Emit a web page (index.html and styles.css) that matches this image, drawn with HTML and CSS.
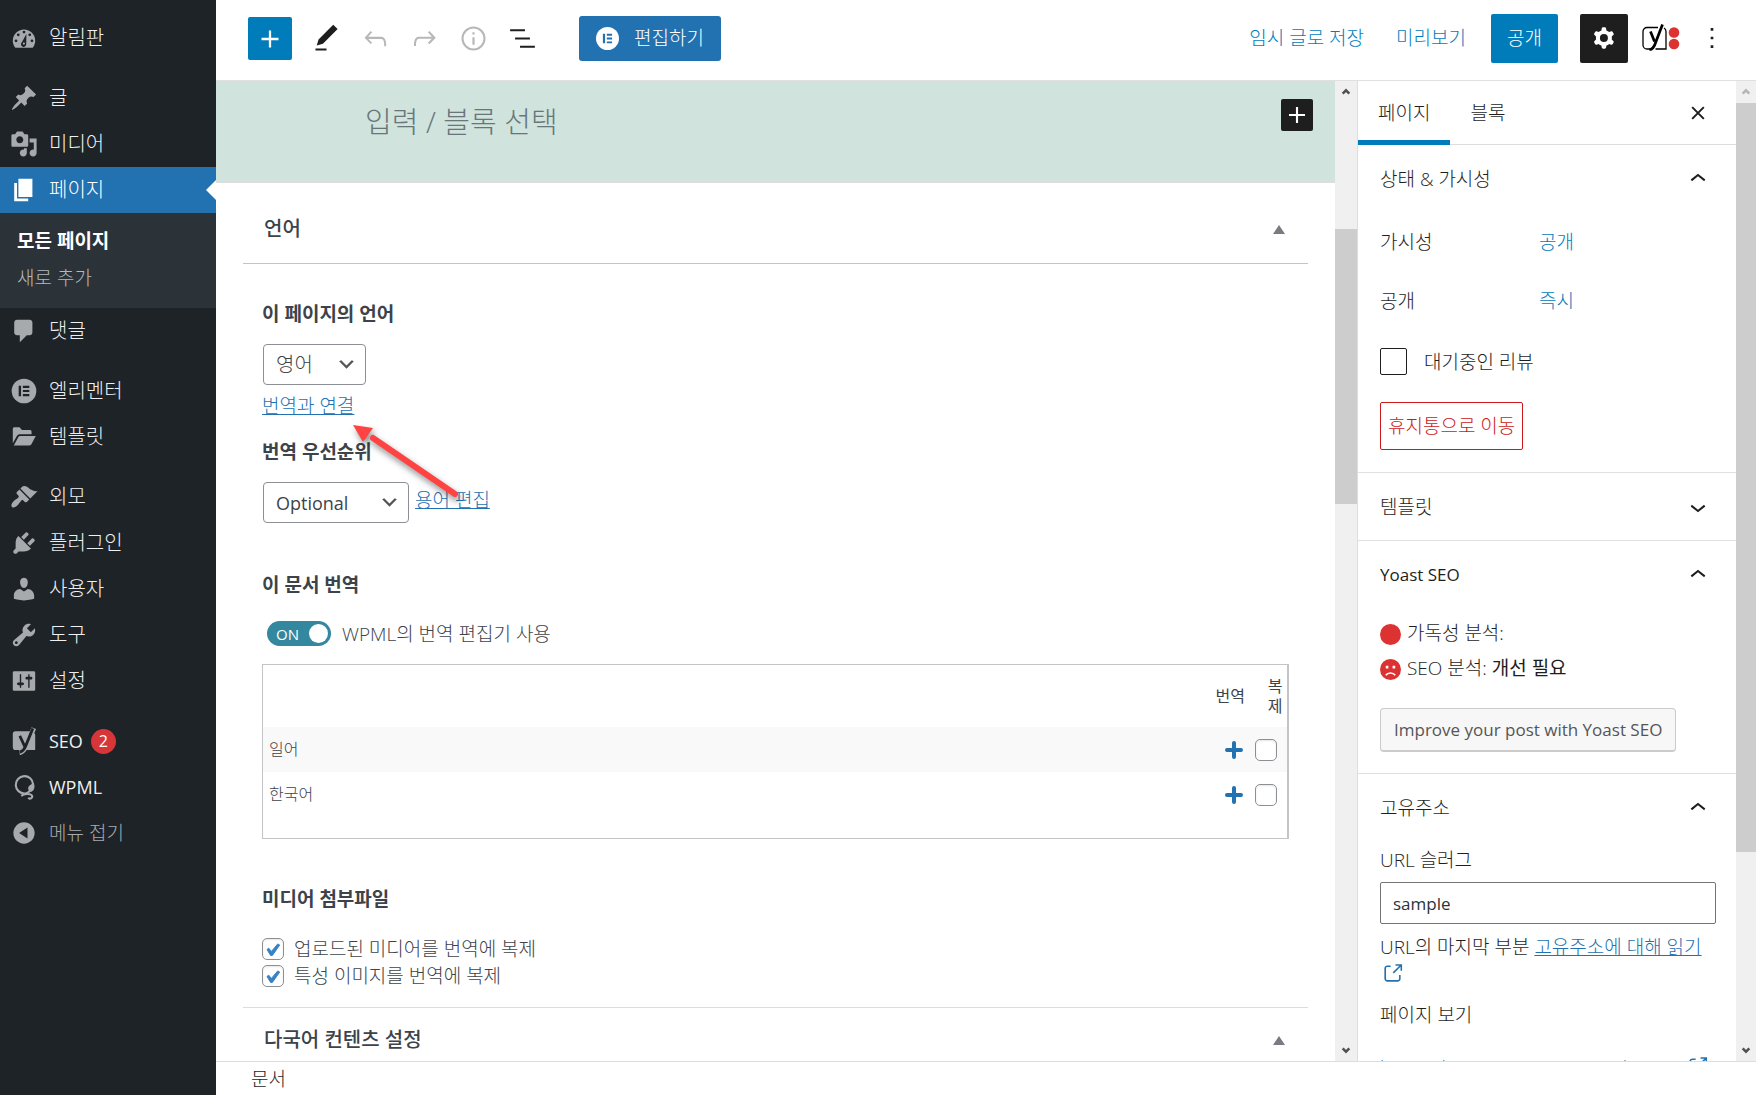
FILE: index.html
```html
<!DOCTYPE html>
<html lang="ko">

<head>
    <meta charset="UTF-8">
    <meta name="viewport" content="width=device-width, initial-scale=1.0">
    <title>페이지 편집</title>
    <link rel="stylesheet" href="styles.css">
</head>

<body>
    <nav class="admin-menu">
        <a class="menu-item" href="#">
            <svg class="menu-icon" viewBox="0 0 20 20"><path fill-rule="evenodd" d="M3.8 17h12.4c1.1-1.4 1.8-3.1 1.8-5 0-4.4-3.6-8-8-8s-8 3.600-8 8c0 1.900.7 3.600 1.800 5z"/><g class="cut"><circle cx="10" cy="5.800" r="1"/><circle cx="5.900" cy="7.700" r="1"/><circle cx="14.100" cy="7.700" r="1"/><circle cx="4.300" cy="12" r="1"/><circle cx="15.700" cy="12" r="1"/><path d="M11.700 7.200l-.1 6.900a1.900 1.900 0 1 1-3-1.200z"/></g><circle cx="9.900" cy="14" r=".8"/></svg>
            <span>알림판</span>
        </a>
        <div class="separator"></div>
        <a class="menu-item" href="#">
            <svg class="menu-icon" viewBox="0 0 20 20"><path d="M10.440 3.020l1.820-1.820 6.360 6.350-1.830 1.820c-1.050-.68-2.480-.57-3.410.36l-.75.75c-.92.93-1.040 2.350-.35 3.410l-1.830 1.820-2.410-2.410-2.800 2.790c-.42.42-3.380 2.710-3.800 2.290s1.860-3.390 2.280-3.810l2.790-2.790L4.100 9.360l1.830-1.820c1.050.69 2.480.57 3.400-.36l.75-.75c.93-.92 1.050-2.350.36-3.410z"/></svg>
            <span>글</span>
        </a>
        <a class="menu-item" href="#">
            <svg class="menu-icon" viewBox="0 0 20 20"><path d="M13 11V4c0-.55-.45-1-1-1h-1.670L9 1H5L3.670 3H2c-.55 0-1 .45-1 1v7c0 .55.45 1 1 1h10c.55 0 1-.45 1-1zM7 4.500c1.380 0 2.500 1.120 2.500 2.500S8.380 9.500 7 9.500 4.500 8.380 4.500 7 5.620 4.500 7 4.500zM14 6h5v10.500c0 1.380-1.120 2.500-2.500 2.500S14 17.880 14 16.500s1.120-2.500 2.500-2.500c.17 0 .34.02.5.05V9h-3V6zm-4 8.050V13h2v3.500c0 1.380-1.120 2.500-2.500 2.500S7 17.880 7 16.500 8.120 14 9.500 14c.17 0 .34.02.5.05z"/></svg>
            <span>미디어</span>
        </a>
        <a class="menu-item current" href="#">
            <svg class="menu-icon" viewBox="0 0 20 20"><path d="M6 15V2h10v13H6zm-1 1h8v2H3V5h2v11z"/></svg>
            <span>페이지</span>
        </a>
        <div class="submenu">
            <a class="active" href="#">모든 페이지</a>
            <a href="#">새로 추가</a>
        </div>
        <a class="menu-item" href="#">
            <svg class="menu-icon" viewBox="0 0 20 20"><path d="M5 2h9c1.100 0 2 .9 2 2v7c0 1.100-.9 2-2 2h-2l-5 5v-5H5c-1.100 0-2-.9-2-2V4c0-1.100.9-2 2-2z"/></svg>
            <span>댓글</span>
        </a>
        <div class="separator"></div>
        <a class="menu-item" href="#">
            <svg class="menu-icon" viewBox="0 0 20 20"><circle cx="10" cy="10" r="8.800"/><path class="cut" d="M6.200 6.300h1.700v7.400H6.200zM9.200 6.300h4.600v1.500H9.200zM9.200 9.250h4.600v1.500H9.200zM9.200 12.200h4.600v1.500H9.200z"/></svg>
            <span>엘리멘터</span>
        </a>
        <a class="menu-item" href="#">
            <svg class="menu-icon" viewBox="0 0 20 20"><path d="M2 14.500V4.200C2 3.500 2.500 3 3.200 3h3.600l1.700 2h5.700c.7 0 1.200.5 1.200 1.200V8H7.200c-1 0-1.800.4-2.300 1.200zM2.700 16l3.200-5.800c.3-.6.8-.9 1.500-.9H18.400l-3 5.700c-.3.6-.8 1-1.500 1z"/></svg>
            <span>템플릿</span>
        </a>
        <div class="separator"></div>
        <a class="menu-item" href="#">
            <svg class="menu-icon" viewBox="0 0 20 20"><path d="M14.480 11.060L7.410 3.990l1.500-1.500c.5-.56 2.300-.47 3.510.32 1.210.8 1.430 1.280 2.910 2.100 1.180.64 2.450 1.260 4.450.85zm-.71.71L6.700 4.700 4.930 6.470c-.39.39-.39 1.020 0 1.410l1.060 1.060c.39.39.39 1.030 0 1.420-.6.6-1.430 1.110-2.210 1.690-.35.26-.7.53-1.010.84C1.430 14.230.4 16.080 1.400 17.070c.99 1 2.840-.03 4.180-1.360.31-.31.58-.66.85-1.020.57-.78 1.080-1.610 1.690-2.210.39-.39 1.020-.39 1.410 0l1.060 1.060c.39.39 1.020.39 1.410 0z"/></svg>
            <span>외모</span>
        </a>
        <a class="menu-item" href="#">
            <svg class="menu-icon" viewBox="0 0 20 20"><path d="M13.110 4.360L9.870 7.600 8 5.730l3.240-3.240c.35-.34 1.050-.2 1.560.32.52.51.66 1.210.31 1.550zm-8 1.770l.91-1.120 9.010 9.010-1.190.84c-.71.71-2.630 1.160-3.820 1.160H6.140L4.900 17.260c-.59.59-1.540.59-2.120 0-.59-.58-.59-1.530 0-2.120l1.240-1.240v-3.880c0-1.130.4-3.190 1.090-3.890zm7.260 3.970l3.240-3.240c.34-.35 1.040-.21 1.550.31.52.51.66 1.210.31 1.550l-3.240 3.250z"/></svg>
            <span>플러그인</span>
        </a>
        <a class="menu-item" href="#">
            <svg class="menu-icon" viewBox="0 0 20 20"><path d="M10 9.250c-2.270 0-2.730-3.440-2.730-3.440C7 4.020 7.820 2 9.970 2c2.160 0 2.980 2.020 2.710 3.810 0 0-.41 3.440-2.680 3.440zm0 2.570L12.720 10c2.390 0 4.520 2.330 4.520 4.530v2.490s-3.650 1.130-7.240 1.130c-3.650 0-7.240-1.130-7.240-1.130v-2.490c0-2.250 1.940-4.480 4.470-4.480z"/></svg>
            <span>사용자</span>
        </a>
        <a class="menu-item" href="#">
            <svg class="menu-icon" viewBox="0 0 20 20"><path d="M16.680 9.770c-1.340 1.340-3.300 1.670-4.950.99l-5.410 6.520c-.99.99-2.590.99-3.580 0s-.99-2.590 0-3.570l6.520-5.420c-.68-1.650-.35-3.610.99-4.950 1.280-1.280 3.120-1.620 4.720-1.060l-2.890 2.890 2.820 2.820 2.860-2.870c.53 1.580.18 3.390-1.080 4.650zM3.810 16.210c.4.39 1.040.39 1.430 0 .4-.4.4-1.040 0-1.430-.39-.4-1.030-.4-1.430 0-.39.39-.39 1.030 0 1.430z"/></svg>
            <span>도구</span>
        </a>
        <a class="menu-item" href="#">
            <svg class="menu-icon" viewBox="0 0 20 20"><path d="M18 16V4c0-.55-.45-1-1-1H3c-.55 0-1 .45-1 1v12c0 .55.45 1 1 1h14c.55 0 1-.45 1-1zM8 11h1c.55 0 1 .45 1 1s-.45 1-1 1H8v1.500c0 .28-.22.5-.5.5s-.5-.22-.5-.5V13H6c-.55 0-1-.45-1-1s.45-1 1-1h1V5.500c0-.28.22-.5.5-.5s.5.22.5.5V11zm5-2h-1c-.55 0-1-.45-1-1s.45-1 1-1h1V5.500c0-.28.22-.5.5-.5s.5.22.5.5V7h1c.55 0 1 .45 1 1s-.45 1-1 1h-1v5.500c0 .28-.22.5-.5.5s-.5-.22-.5-.5V9z"/></svg>
            <span>설정</span>
        </a>
        <div class="separator"></div>
        <a class="menu-item english" href="#">
            <svg class="menu-icon" viewBox="0 0 20 20"><path d="M4 3h11.500L11.600 16.500H4a2 2 0 0 1-2-2V5a2 2 0 0 1 2-2zM16.700 4c.9.500 1.300 1.200 1.300 2v10.500h-6.500z"/><path class="y-edge" d="M17 .8L11.800 13c-1.200 3-2.200 4.900-5 5.400"/><path class="cut-line" d="M16.300 1L11.300 13.300c-1 2.600-2.200 4.200-4.400 4.600M7 6.300l3.500 7.500"/></svg>
            <span>SEO</span>
            <span class="count">2</span>
        </a>
        <a class="menu-item english" href="#">
            <svg class="menu-icon" viewBox="0 0 20 20"><path class="line" d="M10.500 14.600A6.200 6.200 0 1 1 16.500 8M10.500 14.600c2 0 3.200-1.200 4-2.200M8 16.300c2-1.400 6.500-2 7.700-.2.8 1.600-1.800 3.200-2.600 1.500"/><path d="M16.800 7c1.300 2.500.9 5.500-1.800 6.600-2.600-1-2.600-3.800-.5-5z"/></svg>
            <span>WPML</span>
        </a>
        <button class="menu-item collapse" type="button">
            <svg class="menu-icon" viewBox="0 0 20 20"><circle cx="10" cy="10" r="7.600"/><path class="cut" d="M12.500 6v8L6.500 10z"/></svg>
            <span>메뉴 접기</span>
        </button>
    </nav>

    <div class="editor">
        <header class="toolbar">
            <button class="inserter" type="button" aria-label="블록 추가">
                <svg viewBox="0 0 24 24"><path d="M18 11.200h-5.200V6h-1.600v5.200H6v1.600h5.200V18h1.600v-5.200H18z"/></svg>
            </button>
            <div class="tools">
                <button type="button" aria-label="도구"><svg viewBox="0 0 24 24"><path d="M20.100 5.100L16.900 2 6.200 12.700l-1.300 4.400 4.500-1.300L20.100 5.100zM4 20.800h8v-1.500H4v1.500z"/></svg></button>
                <button type="button" aria-label="되돌리기" disabled><svg viewBox="0 0 24 24"><path d="M18.300 11.700c-.6-.6-1.400-.9-2.300-.9H6.700l2.900-3.300-1.100-1-4.500 5L8.500 16l1-1-2.700-2.700H16c.5 0 .9.2 1.300.5 1 1 1 3.400 1 4.500v.3h1.500v-.2c0-1.500 0-4.300-1.500-5.700z"/></svg></button>
                <button type="button" aria-label="다시 실행" disabled><svg viewBox="0 0 24 24"><path d="M15.600 6.500l-1.100 1 2.900 3.300H8c-.9 0-1.700.3-2.300.9-1.400 1.500-1.400 4.200-1.400 5.600v.2h1.500v-.3c0-1.100 0-3.500 1-4.500.3-.3.7-.5 1.300-.5h9.200L14.500 15l1.100 1.100 4.600-4.600-4.600-5z"/></svg></button>
                <button type="button" aria-label="상세" disabled><svg viewBox="0 0 24 24"><circle cx="12" cy="12" r="8" fill="none" stroke="currentColor" stroke-width="1.500"/><path d="M11.200 11h1.600v5.500h-1.600zM11.200 7.500h1.600v1.600h-1.600z"/></svg></button>
                <button type="button" aria-label="목록 보기"><svg viewBox="0 0 24 24"><path d="M13.800 5.200H3v1.500h10.800V5.200zm-3.600 12v1.500H21v-1.500H10.200zm7.200-6H6.600v1.500h10.800v-1.500z"/></svg></button>
            </div>
            <button class="elementor-btn" type="button">
                <svg viewBox="0 0 20 20"><circle cx="10" cy="10" r="10" fill="#fff"/><path d="M6 5.800h1.900v8.400H6zM9.400 5.800H14v1.700H9.400zM9.400 9.150H14v1.700H9.400zM9.400 12.500H14v1.700H9.400z" fill="#2271b1"/></svg>
                편집하기
            </button>
            <div class="toolbar-right">
                <button class="text-btn" type="button">임시 글로 저장</button>
                <button class="text-btn" type="button">미리보기</button>
                <button class="publish" type="button">공개</button>
                <button class="settings" type="button" aria-label="설정">
                    <svg viewBox="0 0 24 24"><path fill-rule="evenodd" d="M10.289 4.836A1 1 0 0111.275 4h1.306a1 1 0 01.987.836l.244 1.466c.787.26 1.503.679 2.108 1.218l1.393-.522a1 1 0 011.216.437l.653 1.130a1 1 0 01-.23 1.273l-1.148.944a6.025 6.025 0 010 2.435l1.149.946a1 1 0 01.23 1.272l-.653 1.130a1 1 0 01-1.216.437l-1.394-.522c-.605.54-1.320.958-2.108 1.218l-.244 1.466a1 1 0 01-.987.836h-1.306a1 1 0 01-.986-.836l-.244-1.466a5.995 5.995 0 01-2.108-1.218l-1.394.522a1 1 0 01-1.217-.436l-.653-1.131a1 1 0 01.23-1.272l1.149-.946a6.026 6.026 0 010-2.435l-1.148-.944a1 1 0 01-.23-1.272l.653-1.131a1 1 0 011.217-.437l1.393.522a5.994 5.994 0 012.108-1.218l.244-1.466zM14.929 12a3 3 0 11-6 0 3 3 0 016 0z"/></svg>
                </button>
                <button class="yoast-btn" type="button" aria-label="Yoast SEO">
                    <svg viewBox="0 0 40 30"><path d="M18 4.500H7a4 4 0 0 0-4 4V22a4 4 0 0 0 4 4h3M15.500 26H26V8.500a4 4 0 0 0-2-3.500" fill="none" stroke="#000" stroke-width="1.300"/><path d="M22.500 1.500L16 18.500c-1.500 5-3.300 8-6.500 8.200M10.500 8.500l4 10" fill="none" stroke="#000" stroke-width="2.700"/><circle cx="34" cy="9.500" r="5.300" fill="#dc3232"/><circle cx="34" cy="21" r="5.300" fill="#dc3232"/></svg>
                </button>
                <button class="kebab" type="button" aria-label="옵션">
                    <svg viewBox="0 0 24 24"><path d="M11 4.500h2v2h-2zM11 11h2v2h-2zM11 17.500h2v2h-2z"/></svg>
                </button>
            </div>
        </header>

        <div class="workspace">
            <main class="content">
                <div class="canvas">
                    <p class="placeholder">입력 / 블록 선택</p>
                    <button class="block-add" type="button" aria-label="블록 추가">
                        <svg viewBox="0 0 24 24"><path d="M18 11.200h-5.200V6h-1.600v5.200H6v1.600h5.200V18h1.600v-5.200H18z"/></svg>
                    </button>
                </div>

                <div class="metaboxes">
                    <section class="metabox">
                        <h2 class="metabox-title">언어 <span class="triangle"></span></h2>
                        <div class="metabox-body">
                            <label class="field-title" for="page-lang">이 페이지의 언어</label>
                            <select id="page-lang" class="lang-select">
                                <option>영어</option>
                            </select>
                            <a class="connect-link" href="#">번역과 연결</a>

                            <label class="field-title" for="priority">번역 우선순위</label>
                            <div class="priority-row">
                                <select id="priority" class="priority-select">
                                    <option>Optional</option>
                                </select>
                                <a href="#">용어 편집</a>
                            </div>

                            <h3 class="field-title wide">이 문서 번역</h3>
                            <div class="toggle-row">
                                <label class="toggle"><span>ON</span><input type="checkbox" id="use-editor" checked></label>
                                <label for="use-editor">WPML의 번역 편집기 사용</label>
                            </div>
                            <table class="translations">
                                <thead>
                                    <tr><th></th><th class="col-add">번역</th><th class="col-copy">복제</th></tr>
                                </thead>
                                <tbody>
                                    <tr>
                                        <td>일어</td>
                                        <td class="col-add"><a href="#" aria-label="일어 번역 추가"><svg viewBox="0 0 18 18"><path d="M9 2v14M2 9h14"/></svg></a></td>
                                        <td class="col-copy"><input class="wp-check" type="checkbox" aria-label="일어로 복제"></td>
                                    </tr>
                                    <tr>
                                        <td>한국어</td>
                                        <td class="col-add"><a href="#" aria-label="한국어 번역 추가"><svg viewBox="0 0 18 18"><path d="M9 2v14M2 9h14"/></svg></a></td>
                                        <td class="col-copy"><input class="wp-check" type="checkbox" aria-label="한국어로 복제"></td>
                                    </tr>
                                </tbody>
                            </table>

                            <h3 class="field-title wide">미디어 첨부파일</h3>
                            <div class="check-list">
                                <label><input class="wp-check" type="checkbox" checked>업로드된 미디어를 번역에 복제</label>
                                <label><input class="wp-check" type="checkbox" checked>특성 이미지를 번역에 복제</label>
                            </div>
                            <!-- arrow pointing at the connect link -->
                            <svg class="arrow" viewBox="0 0 120 90"><path d="M106 73L24 17" stroke="#ff4343" stroke-width="6" stroke-linecap="round"/><path d="M4 4l20 3-10 14z" fill="#ff4343"/></svg>
                        </div>
                    </section>
                    <section class="metabox">
                        <h2 class="metabox-title">다국어 컨텐츠 설정 <span class="triangle"></span></h2>
                    </section>
                </div>
            </main>
            <div class="scrollbar content-scroll">
                <svg viewBox="0 0 12 12"><path d="M2 8l4-4 4 4"/></svg>
                <div class="track"><div class="thumb"></div></div>
                <svg viewBox="0 0 12 12"><path d="M2 4l4 4 4-4"/></svg>
            </div>

            <aside class="sidebar">
                <div class="tabs">
                    <button class="tab active" type="button">페이지</button>
                    <button class="tab" type="button">블록</button>
                    <button class="close" type="button" aria-label="닫기"><svg viewBox="0 0 24 24"><path d="M5 5l14 14M19 5L5 19"/></svg></button>
                </div>

                <section class="panel">
                    <button class="panel-title" type="button">상태 &amp; 가시성 <svg viewBox="0 0 24 24"><path d="M6.500 12.400L12 8l5.500 4.400-.9 1.200L12 10l-4.500 3.600-1-1.200z"/></svg></button>
                    <div class="status-row"><span>가시성</span><a href="#">공개</a></div>
                    <div class="status-row"><span>공개</span><a href="#">즉시</a></div>
                    <label class="pending"><input type="checkbox">대기중인 리뷰</label>
                    <button class="trash" type="button">휴지통으로 이동</button>
                </section>

                <section class="panel closed">
                    <button class="panel-title" type="button">템플릿 <svg viewBox="0 0 24 24"><path d="M17.500 11.600L12 16l-5.500-4.400.9-1.200L12 14l4.500-3.600 1 1.200z"/></svg></button>
                </section>

                <section class="panel">
                    <button class="panel-title latin" type="button">Yoast SEO <svg viewBox="0 0 24 24"><path d="M6.500 12.400L12 8l5.500 4.400-.9 1.200L12 10l-4.500 3.600-1-1.200z"/></svg></button>
                    <ul class="scores">
                        <li><svg viewBox="0 0 20 20"><circle cx="10" cy="10" r="10" fill="#dc3232"/></svg><span>가독성 분석:</span></li>
                        <li><svg viewBox="0 0 20 20"><circle cx="10" cy="10" r="10" fill="#dc3232"/><path d="M5.500 6.500h2.500v2.500H5.500zM12 6.500h2.500v2.500H12z" fill="#fff"/><path d="M5.500 15.500c2-3 7-3 9 0" fill="none" stroke="#fff" stroke-width="1.500"/></svg><span>SEO 분석: <strong>개선 필요</strong></span></li>
                    </ul>
                    <button class="improve" type="button">Improve your post with Yoast SEO</button>
                </section>

                <section class="panel">
                    <button class="panel-title" type="button">고유주소 <svg viewBox="0 0 24 24"><path d="M6.500 12.400L12 8l5.500 4.400-.9 1.200L12 10l-4.500 3.600-1-1.200z"/></svg></button>
                    <label class="slug-label" for="slug">URL 슬러그</label>
                    <input class="slug" id="slug" type="text" value="sample">
                    <p class="slug-help">URL의 마지막 부분 <a href="#">고유주소에 대해 읽기</a><br><svg viewBox="0 0 24 24"><path d="M18.200 17c0 .7-.6 1.200-1.200 1.200H7c-.7 0-1.200-.6-1.200-1.200V7c0-.7.6-1.200 1.200-1.200h3.200V4.200H7C5.500 4.200 4.200 5.500 4.200 7v10c0 1.500 1.200 2.800 2.800 2.800h10c1.500 0 2.800-1.200 2.800-2.800v-3.600h-1.500V17zM14.900 3v1.500h3.700l-6.400 6.400 1.100 1.100 6.400-6.400v3.700h1.500V3h-6.300z"/></svg></p>
                    <p class="view-page">페이지 보기</p>
                    <a class="permalink" href="#">https://homepage.test/sample/ <svg viewBox="0 0 24 24"><path d="M18.200 17c0 .7-.6 1.200-1.200 1.200H7c-.7 0-1.200-.6-1.200-1.200V7c0-.7.6-1.200 1.200-1.200h3.200V4.200H7C5.500 4.200 4.200 5.500 4.200 7v10c0 1.500 1.200 2.800 2.800 2.800h10c1.500 0 2.800-1.200 2.800-2.800v-3.600h-1.500V17zM14.900 3v1.500h3.700l-6.400 6.400 1.100 1.100 6.400-6.400v3.700h1.500V3h-6.300z"/></svg></a>
                </section>
            </aside>
            <div class="scrollbar side-scroll">
                <svg class="off" viewBox="0 0 12 12"><path d="M2 8l4-4 4 4"/></svg>
                <div class="track"><div class="thumb"></div></div>
                <svg viewBox="0 0 12 12"><path d="M2 4l4 4 4-4"/></svg>
            </div>
        </div>

        <footer class="breadcrumb">문서</footer>
    </div>
</body>

</html>
```

FILE: styles.css
```css
* {
    margin: 0;
    padding: 0;
    box-sizing: border-box;
}

body {
    display: flex;
    height: 100vh;
    overflow: hidden;
    background: #fff;
    color: #1e1e1e;
    font-family: "Open Sans", "Noto Sans CJK KR", sans-serif;
    font-size: 19px;
    font-weight: 300;
    line-height: 26px;
}

button,
input,
select {
    font: inherit;
    color: inherit;
}

button {
    background: none;
    border: 0;
    cursor: pointer;
}

svg {
    display: block;
    flex: none;
    fill: currentColor;
}

a {
    color: #2271b1;
}

/* Admin menu */
.admin-menu {
    flex: none;
    width: 216px;
    padding-top: 15px;
    background: #1d2327;
    font-size: 20px;
}

.menu-item {
    position: relative;
    display: flex;
    align-items: center;
    gap: 11px;
    width: 100%;
    height: 46px;
    padding-left: 10px;
    color: #f0f0f1;
    text-decoration: none;
}

.english {
    font-size: 18px;
    font-weight: 400;
}

.menu-icon {
    width: 28px;
    height: 28px;
    color: #a7aaad;
}

.cut {
    fill: #1d2327;
}

.cut-line,
.y-edge {
    fill: none;
    stroke: #1d2327;
    stroke-width: 2;
}

.y-edge {
    stroke: currentColor;
    stroke-width: 3.5;
}

.line {
    fill: none;
    stroke: currentColor;
    stroke-width: 1.5;
}

.separator {
    height: 14px;
}

.current {
    background: #2271b1;
    color: #fff;
}

.current .menu-icon {
    color: #fff;
}

.current::after {
    content: '';
    position: absolute;
    right: 0;
    border: 10px solid transparent;
    border-right-color: #fff;
}

.submenu {
    display: flex;
    flex-direction: column;
    height: 95px;
    padding: 10px 17px;
    background: #2c3338;
    font-size: 19px;
}

.submenu a {
    line-height: 37px;
    color: #b4b9be;
    text-decoration: none;
}

.submenu .active {
    color: #fff;
    font-weight: 700;
}

.count {
    width: 25px;
    height: 25px;
    margin-left: -3px;
    border-radius: 50%;
    background: #d63638;
    color: #fff;
    font-size: 16px;
    line-height: 24px;
    text-align: center;
}

.collapse {
    color: #a7aaad;
    font-size: 19px;
}

/* Editor frame */
.editor {
    display: flex;
    flex: 1;
    flex-direction: column;
    min-width: 0;
}

.toolbar {
    display: flex;
    flex: none;
    align-items: center;
    height: 81px;
    padding: 0 28px 4px 32px;
    border-bottom: 1px solid #e0e0e0;
}

.inserter {
    width: 44px;
    height: 43px;
    padding: 5px;
    border-radius: 2px;
    background: #007cba;
    color: #fff;
}

.inserter svg {
    width: 34px;
    height: 34px;
}

.tools {
    display: flex;
    gap: 16px;
    margin-left: 18px;
}

.tools svg {
    width: 33px;
    height: 33px;
}

.tools button:disabled {
    color: #b8b8b8;
}

.elementor-btn {
    display: flex;
    align-items: center;
    gap: 15px;
    height: 45px;
    margin-left: 40px;
    padding: 0 17px;
    border-radius: 3px;
    background: #2271b1;
    color: #fff;
}

.elementor-btn svg {
    width: 23px;
    height: 23px;
}

.toolbar-right {
    display: flex;
    align-items: center;
    margin-left: auto;
}

.text-btn {
    margin-right: 32px;
    color: #007cba;
}

.publish {
    width: 67px;
    height: 49px;
    margin-left: -7px;
    border-radius: 2px;
    background: #007cba;
    color: #fff;
}

.settings {
    width: 48px;
    height: 49px;
    margin-left: 22px;
    padding: 8px;
    border-radius: 2px;
    background: #1e1e1e;
    color: #fff;
}

.settings svg {
    width: 32px;
    height: 32px;
}

.yoast-btn {
    margin-left: 11px;
}

.yoast-btn svg {
    width: 42px;
    height: 30px;
}

.kebab {
    margin-left: 15px;
}

.kebab svg {
    width: 32px;
    height: 32px;
}

.workspace {
    display: flex;
    flex: 1;
    min-height: 0;
}

.content {
    flex: 1;
    min-width: 0;
    overflow: hidden;
}

.canvas {
    display: flex;
    justify-content: space-between;
    height: 102px;
    padding: 18px 22px 0 149px;
    border-bottom: 1px solid #ddd;
    background: #d0e4dd;
}

.placeholder {
    color: #68767a;
    font-size: 29px;
    line-height: 46px;
}

.block-add {
    width: 32px;
    height: 32px;
    border-radius: 2px;
    background: #1e1e1e;
    color: #fff;
}

/* Metaboxes */
.metaboxes {
    padding: 14px 27px 0;
    color: #3c434a;
}

.metabox-title {
    display: flex;
    align-items: center;
    justify-content: space-between;
    height: 67px;
    padding: 0 23px 2px 21px;
    border-bottom: 1px solid #c3c4c7;
    font-size: 20px;
    font-weight: 500;
}

.triangle {
    border: 6px solid transparent;
    border-top: 0;
    border-bottom: 9px solid #787c82;
}

.metabox-body {
    position: relative;
    display: flex;
    flex-direction: column;
    align-items: flex-start;
    padding: 37px 19px 18px;
    border-bottom: 1px solid #dcdcde;
}

.field-title {
    margin-bottom: 17px;
    font-size: 19px;
    font-weight: 700;
}

.lang-select,
.priority-select {
    appearance: none;
    height: 41px;
    margin-left: 1px;
    padding: 0 12px;
    border: 1px solid #8c8f94;
    border-radius: 4px;
    background: #fff url("data:image/svg+xml,%3Csvg xmlns='http://www.w3.org/2000/svg' viewBox='0 0 20 20'%3E%3Cpath d='M5 6l5 5 5-5 2 1-7 7-7-7z' fill='%23555'/%3E%3C/svg%3E") no-repeat right 8px center / 21px 21px;
}

.lang-select {
    width: 103px;
    font-size: 20px;
}

.priority-select {
    width: 146px;
    font-size: 18px;
    font-weight: 400;
}

.connect-link {
    margin: 8px 0 20px;
}

.priority-row {
    display: flex;
    gap: 6px;
    padding-bottom: 49px;
}

.priority-row a {
    padding-top: 5px;
}

.wide {
    margin-bottom: 23px;
}

.toggle-row {
    display: flex;
    align-items: center;
    gap: 11px;
    height: 25px;
    padding-left: 5px;
}

.toggle {
    display: flex;
    align-items: center;
    justify-content: space-between;
    width: 64px;
    height: 25px;
    padding: 0 3px 0 9px;
    border-radius: 13px;
    background: #33879e;
    color: #fff;
    font-size: 15px;
    font-weight: 400;
}

.toggle input {
    appearance: none;
    width: 19px;
    height: 19px;
    border-radius: 50%;
    background: #fff;
}

.translations {
    width: 100%;
    height: 175px;
    margin: 18px 0 47px;
    padding-bottom: 21px;
    border: 1px solid #c3c4c7;
    border-right-width: 2px;
    border-spacing: 0;
    font-size: 16px;
    line-height: 20px;
}

.translations th {
    height: 62px;
    font-weight: 400;
}

.translations td {
    height: 45px;
    padding: 0 0 2px 6px;
}

.translations tbody tr:first-child {
    background: #f9f9f9;
}

.translations .col-add {
    width: 58px;
    padding: 0 12px 0 0;
    text-align: right;
}

.translations th.col-add {
    padding-right: 10px;
}

.translations .col-copy {
    width: 32px;
    padding: 0 4px 0 12px;
}

.translations td.col-copy {
    padding: 0 10px 0 0;
}

.col-add svg {
    width: 18px;
    height: 18px;
    margin-left: auto;
    stroke: #2271b1;
    stroke-width: 4;
    stroke-linecap: round;
}

.wp-check {
    appearance: none;
    display: block;
    flex: none;
    width: 22px;
    height: 22px;
    border: 1px solid #8c8f94;
    border-radius: 5px;
    background: #fff;
    box-shadow: inset 0 1px 2px rgba(0, 0, 0, 0.1);
}

.wp-check:checked {
    background: #fff url("data:image/svg+xml,%3Csvg xmlns='http://www.w3.org/2000/svg' viewBox='0 0 20 20'%3E%3Cpath d='M14.800 4.900l1.900 1.200-7.300 10.300H7.600L4 10.500l1.700-1.300 2.700 3.200z' fill='%233582c4' stroke='%233582c4'/%3E%3C/svg%3E") center / 20px 20px;
}

.check-list label {
    display: flex;
    align-items: center;
    gap: 10px;
    height: 27px;
}

.arrow {
    position: absolute;
    top: 157px;
    left: 106px;
    width: 120px;
    height: 90px;
    overflow: visible;
    filter: drop-shadow(2px 4px 3px rgba(0, 0, 0, 0.45));
    pointer-events: none;
}

/* Scrollbars */
.scrollbar {
    display: flex;
    flex: none;
    flex-direction: column;
    align-items: center;
    width: 22px;
    background: #f0f0f0;
}

.scrollbar svg {
    width: 10px;
    height: 22px;
    fill: none;
    stroke: #505050;
    stroke-width: 3;
}

.scrollbar .off {
    stroke: #b5b5b5;
}

.track {
    flex: 1;
    width: 100%;
}

.thumb {
    height: 80%;
    background: #cdcdcd;
}

.content-scroll .track {
    padding-top: 126px;
}

.content-scroll .thumb {
    height: 34%;
}

.side-scroll {
    width: 20px;
}

/* Settings sidebar */
.sidebar {
    flex: none;
    width: 379px;
    overflow: hidden;
    border-left: 1px solid #ddd;
}

.tabs {
    display: flex;
    height: 64px;
    border-bottom: 1px solid #ddd;
}

.tab {
    height: 64px;
    padding: 4px 20px 0;
    border-bottom: 5px solid transparent;
}

.tab.active {
    border-bottom-color: #007cba;
}

.close {
    width: 32px;
    margin: 0 22px 0 auto;
}

.close svg {
    width: 20px;
    height: 20px;
    margin: 0 auto;
    stroke: #1e1e1e;
    stroke-width: 2.4;
}

.panel {
    padding: 0 20px 21px 22px;
    border-bottom: 1px solid #e0e0e0;
}

.panel.closed {
    padding-bottom: 0;
}

.panel-title {
    display: flex;
    align-items: center;
    justify-content: space-between;
    width: 100%;
    height: 67px;
    padding-right: 2px;
    text-align: left;
}

.panel-title svg {
    width: 32px;
    height: 32px;
}

.latin {
    font-weight: 500;
    font-size: 17px;
}

.status-row {
    display: flex;
    height: 59px;
    align-items: center;
    padding-top: 1px;
}

.status-row span {
    width: 159px;
}

.status-row a {
    color: #007cba;
    text-decoration: none;
}

.pending {
    display: flex;
    align-items: center;
    gap: 17px;
    margin: 18px 0 27px;
}

.pending input {
    appearance: none;
    width: 27px;
    height: 27px;
    border: 1px solid #1e1e1e;
    border-radius: 2px;
}

.trash {
    display: block;
    height: 48px;
    margin-bottom: 22px;
    padding: 0 7px;
    border: 1px solid #cc1818;
    border-radius: 2px;
    color: #cc1818;
}

.panel:has(.trash) {
    padding-bottom: 0;
}

.scores {
    padding: 7px 0 23px;
    list-style: none;
}

.scores li {
    display: flex;
    align-items: center;
    gap: 6px;
    height: 35px;
}

.scores svg {
    width: 21px;
    height: 21px;
    margin-top: 3px;
}

.improve {
    height: 44px;
    padding: 0 13px;
    border: 1px solid #ccc;
    border-bottom-width: 2px;
    border-radius: 4px;
    background: #f7f7f7;
    color: #555;
    font-size: 17px;
    font-weight: 400;
}

.slug-label {
    display: block;
    margin: 6px 0 9px;
}

.slug {
    display: block;
    width: 100%;
    height: 42px;
    padding: 0 12px;
    border: 1px solid #757575;
    border-radius: 2px;
    color: #2c3338;
    font-size: 17px;
    font-weight: 400;
}

.slug-help {
    margin-top: 10px;
    line-height: 27px;
    white-space: nowrap;
}

.slug-help svg,
.permalink svg {
    width: 25px;
    height: 25px;
    color: #2271b1;
}

.view-page {
    margin: 16px 0 26px;
}

.permalink {
    display: flex;
    justify-content: space-between;
    padding-right: 6px;
    text-decoration: none;
}

/* Footer */
.breadcrumb {
    flex: none;
    height: 34px;
    padding: 4px 35px;
    border-top: 1px solid #ddd;
}
```
